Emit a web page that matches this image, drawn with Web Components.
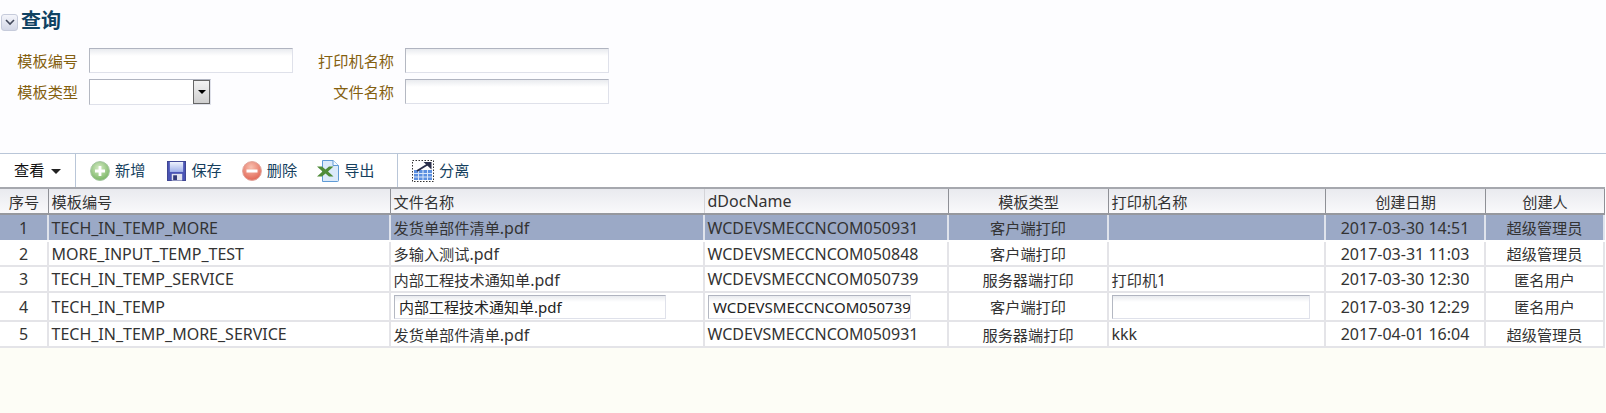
<!DOCTYPE html>
<html lang="zh">
<head>
<meta charset="utf-8">
<title>查询</title>
<style>
  html, body { margin: 0; height: 100%; }
  body {
    background: #fdfdf6;
    font-family: "Noto Sans", "Noto Sans CJK SC", sans-serif;
    font-size: 15.2px;
    overflow: hidden;
  }
</style>
</head>
<body>
<query-panel></query-panel>
<tool-bar>
  <tool-button slot="view" kind="view">查看</tool-button>
  <tool-button kind="add">新增</tool-button>
  <tool-button kind="save">保存</tool-button>
  <tool-button kind="del">删除</tool-button>
  <tool-button kind="excel">导出</tool-button>
  <tool-button slot="after" kind="split">分离</tool-button>
</tool-bar>
<data-grid></data-grid>

<script>
  const ICONS = {
    add: `<svg width="20" height="20" viewBox="0 0 20 20"><defs><radialGradient id="g" cx=".45" cy=".35" r=".7"><stop offset="0" stop-color="#d6ecc6"/><stop offset="1" stop-color="#74b25e"/></radialGradient></defs><circle cx="10" cy="10" r="9.400" fill="url(#g)" stroke="#a3c4a0"/><path d="M8.600 5h2.800v3.600H15v2.800h-3.600V15H8.600v-3.600H5V8.600h3.600z" fill="#fff"/></svg>`,
    save: `<svg width="19" height="20" viewBox="0 0 20 21"><defs><linearGradient id="s" x1="0" y1="0" x2="0" y2="1"><stop offset="0" stop-color="#eef2fd"/><stop offset="1" stop-color="#9fb0ea"/></linearGradient></defs><rect x=".5" y=".5" width="19" height="20" fill="#4b55b5" stroke="#3a4290"/><rect x="3" y="1" width="14" height="10.500" fill="url(#s)"/><rect x="5" y="13.500" width="11" height="7" fill="#e2e3ee"/><rect x="6.500" y="15" width="4" height="5" fill="#333a78"/></svg>`,
    del: `<svg width="20" height="20" viewBox="0 0 20 20"><defs><radialGradient id="r" cx=".45" cy=".3" r=".75"><stop offset="0" stop-color="#f8c0b0"/><stop offset="1" stop-color="#e0604e"/></radialGradient></defs><circle cx="10" cy="10" r="9.400" fill="url(#r)" stroke="#e0a59c"/><rect x="4.500" y="8.500" width="11" height="3" fill="#fff"/></svg>`,
    excel: `<svg width="22" height="22" viewBox="0 0 22 22"><path d="M5.500.5h10.500l5.500 5v15a1 1 0 0 1-1 1H5.500z" fill="#dbeafa" stroke="#5f9bd6"/><path d="M16 .5v5h5.500" fill="#f4f9ff" stroke="#5f9bd6"/><path d="M0 6.500h5l3.500 3 3.500-3h4.500l-5.500 5 5.500 5H12l-3.500-3-3.500 3H0l5.500-5z" fill="#4f8c38"/></svg>`,
    split: `<svg width="22" height="22" viewBox="0 0 22 22"><rect x=".5" y=".5" width="21" height="21" fill="#fff" stroke="#333" stroke-dasharray="1.500 1.500"/><rect x="2" y="10" width="18" height="10" fill="#5b8fe0"/><path d="M2 13.500h18M2 17h18M6.500 10v10M11 10v10M15.500 10v10" stroke="#d8e6fa"/><path d="M5 11 15.500 4.500" stroke="#2a2f4a" stroke-width="2"/><path d="M11.500 2h8v7.500z" fill="#2a2f4a"/></svg>`,
  };

  const BUTTON_OFFSET = { save: 1, del: -1, excel: -1 };

  class ToolButton extends HTMLElement {
    constructor() {
      super();
      this.attachShadow({ mode: "open" });
    }
    connectedCallback() {
      const kind = this.getAttribute("kind");
      const icon = kind === "view"
        ? ""
        : `<span class="icon">${ICONS[kind]}</span>`;
      const caret = kind === "view" ? `<span class="caret"></span>` : "";
      this.shadowRoot.innerHTML = `
        <style>
          :host {
            display: inline-flex; align-items: center; height: 100%;
            color: ${kind === "view" ? "#111" : "#163f5e"};
            margin-left: ${BUTTON_OFFSET[kind] || 0}px;
          }
          .icon { display: flex; margin-right: 5px; }
          .text { margin-bottom: 3px; }
          .caret {
            width: 0; height: 0; margin-left: 7px; margin-top: 1px;
            border: 5px solid transparent; border-top: 5px solid #222; border-bottom: 0;
          }
        </style>
        ${icon}<span class="text"><slot></slot></span>${caret}
      `;
    }
  }

  class ToolBar extends HTMLElement {
    constructor() {
      super();
      this.attachShadow({ mode: "open" }).innerHTML = `
        <style>
          :host {
            display: flex; height: 33px; background: #fff;
            border-top: 1px solid #b9c6d8;
          }
          .view { display: flex; align-items: center; width: 76px; padding-left: 14px; box-sizing: border-box; border-right: 1px solid #b9c6d8; }
          .main { display: flex; align-items: center; gap: 21px; width: 322px; padding-left: 14px; box-sizing: border-box; border-right: 1px solid #b9c6d8; }
          .after { display: flex; align-items: center; padding-left: 14px; }
        </style>
        <div class="view"><slot name="view"></slot></div>
        <div class="main"><slot></slot></div>
        <div class="after"><slot name="after"></slot></div>
      `;
    }
  }

  class FormField extends HTMLElement {
    constructor() {
      super();
      this.attachShadow({ mode: "open" });
    }
    connectedCallback() {
      const isSelect = this.hasAttribute("select");
      this.shadowRoot.innerHTML = `
        <style>
          :host { display: grid; grid-template-columns: var(--label-w) auto; align-items: center; column-gap: 11px; }
          label { text-align: right; color: #84600f; white-space: nowrap; margin-bottom: 2px; }
          .box {
            box-sizing: border-box; height: 25px; width: 204px;
            background: linear-gradient(#e9ebef, #fff 7px);
            border: 1px solid #dfe1ea; border-top: 1px solid #b0b4c0; border-left: 1px solid #b4b8c2;
          }
          .select {
            width: 122px; height: 26px; background: #fff; position: relative;
            display: flex; justify-content: flex-end;
          }
          .arrow {
            width: 17px; box-sizing: border-box; border: 1px solid #666;
            background: linear-gradient(#f2f2f2, #cfcfcf);
            display: flex; align-items: center; justify-content: center;
          }
          .arrow i { width: 0; height: 0; border: 4px solid transparent; border-top: 4px solid #000; border-bottom: 0; }
        </style>
        <label>${this.getAttribute("label")}</label>
        ${isSelect
          ? `<div class="box select"><div class="arrow"><i></i></div></div>`
          : `<div class="box"></div>`}
      `;
    }
  }

  class QueryPanel extends HTMLElement {
    constructor() {
      super();
      this.attachShadow({ mode: "open" }).innerHTML = `
        <style>
          :host { display: block; height: 153px; box-sizing: border-box; background: #fdfdff; padding-top: 8px; }
          .head { display: flex; align-items: center; height: 26px; padding-left: 1px; }
          .toggle {
            width: 17px; height: 17px; box-sizing: border-box; margin-right: 3px; margin-top: 2px;
            border: 1px solid #c6cbdb; border-radius: 3px;
            background: linear-gradient(#f4f5fb, #d3d7e6);
            display: flex; align-items: center; justify-content: center;
          }
          h1 { margin: 0; font-size: 20px; font-weight: 700; color: #0f4263; line-height: 26px; }
          form {
            margin: 14px 0 0 0; display: grid;
            grid-template-columns: auto auto; justify-content: start;
            row-gap: 6px; column-gap: 24px; padding-left: 16px;
            align-items: start;
          }
          form > :nth-child(odd) { --label-w: 62px; }
          form > :nth-child(even) { --label-w: 77px; }
        </style>
        <div class="head">
          <div class="toggle">
            <svg width="10" height="7" viewBox="0 0 10 7"><path d="M1 1l4 4 4-4" fill="none" stroke="#444a5c" stroke-width="1.600"/></svg>
          </div>
          <h1>查询</h1>
        </div>
        <form>
          <form-field label="模板编号"></form-field>
          <form-field label="打印机名称"></form-field>
          <form-field label="模板类型" select></form-field>
          <form-field label="文件名称"></form-field>
        </form>
      `;
    }
  }

  const COLUMNS = "49px 342px 314px 244px 160px 217px 160px 119px";
  const HEADERS = [
    ["序号", "c"], ["模板编号", "l"], ["文件名称", "l"], ["dDocName", "l"],
    ["模板类型", "c"], ["打印机名称", "l"], ["创建日期", "c"], ["创建人", "c"],
  ];
  const ROWS = [
    { h: 27, sel: true, cells: ["1", "TECH_IN_TEMP_MORE", "发货单部件清单.pdf", "WCDEVSMECCNCOM050931", "客户端打印", "", "2017-03-30 14:51", "超级管理员"] },
    { h: 25, cells: ["2", "MORE_INPUT_TEMP_TEST", "多输入测试.pdf", "WCDEVSMECCNCOM050848", "客户端打印", "", "2017-03-31 11:03", "超级管理员"] },
    { h: 26, cells: ["3", "TECH_IN_TEMP_SERVICE", "内部工程技术通知单.pdf", "WCDEVSMECCNCOM050739", "服务器端打印", "打印机1", "2017-03-30 12:30", "匿名用户"] },
    { h: 29, edit: { 2: 272, 3: 203, 5: 198 }, cells: ["4", "TECH_IN_TEMP", "内部工程技术通知单.pdf", "WCDEVSMECCNCOM050739", "客户端打印", "", "2017-03-30 12:29", "匿名用户"] },
    { h: 26, cells: ["5", "TECH_IN_TEMP_MORE_SERVICE", "发货单部件清单.pdf", "WCDEVSMECCNCOM050931", "服务器端打印", "kkk", "2017-04-01 16:04", "超级管理员"] },
  ];

  // grid latin text is a size up from the cjk text, so runs get split
  function sized(text) {
    return `<span>${text.replace(/[\u4e00-\u9fff]+/g, (run) => `<span class="cjk">${run}</span>`)}</span>`;
  }

  class DataGrid extends HTMLElement {
    constructor() {
      super();
      const head = HEADERS.map(([t, a]) => `<div class="th ${a}">${sized(t)}</div>`).join("");
      const rows = ROWS.map((r) => {
        const cells = r.cells.map((t, i) => {
          const align = HEADERS[i][1];
          const w = r.edit && r.edit[i];
          const inner = w ? `<span class="edit" style="width:${w}px">${t}</span>` : sized(t);
          return `<div class="td ${align}">${inner}</div>`;
        }).join("");
        return `<div class="row${r.sel ? " sel" : ""}" style="height:${r.h}px">${cells}</div>`;
      }).join("");
      this.attachShadow({ mode: "open" }).innerHTML = `
        <style>
          :host { display: block; color: #333; background: #fff; font-size: 16px; }
          .cjk { font-size: 15.2px; }
          .head, .row { display: grid; grid-template-columns: ${COLUMNS}; width: 1605px; box-sizing: border-box; }
          .head {
            height: 28px; border-top: 2px solid #a6a8ae; border-bottom: 2px solid #96989e;
            background: linear-gradient(#e9eaef, #f9f9fb);
          }
          .th { display: flex; align-items: center; padding: 0 2.500px; border-right: 1px solid #8e9096; white-space: pre; min-width: 0; }
          .th:nth-child(3) { border-right-color: #d4d4d8; }
          .row { border-bottom: 2px solid #e4e4e8; background: #fff; }
          .row.sel { background: #9ba9c6; border-bottom-color: #fff; }
          .td { display: flex; align-items: center; padding: 0 2.500px; border-right: 2px solid #e4e4e8; white-space: pre; min-width: 0; }
          .sel .td { border-right-color: #dfe3ec; }
          .c { justify-content: center; }
          .edit {
            box-sizing: border-box; height: 24px; margin-left: .5px; padding-left: 4px; font-size: 15px;
            display: flex; align-items: center; color: #222; overflow: hidden;
            background: linear-gradient(#e9ebef, #fff 6px);
            border: 1px solid #dfe1ea; border-top: 1px solid #b0b4c0; border-left: 1px solid #b4b8c2;
          }
        </style>
        <div class="head">${head}</div>
        ${rows}
      `;
    }
  }

  customElements.define("tool-button", ToolButton);
  customElements.define("tool-bar", ToolBar);
  customElements.define("form-field", FormField);
  customElements.define("query-panel", QueryPanel);
  customElements.define("data-grid", DataGrid);
</script>
</body>
</html>
